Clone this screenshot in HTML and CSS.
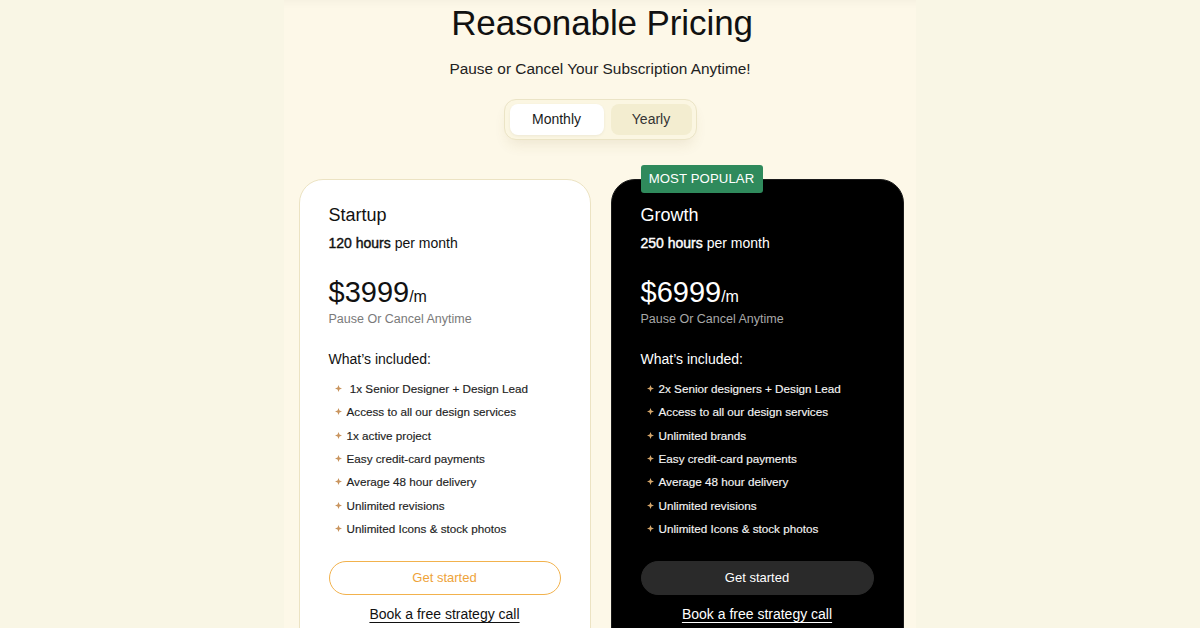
FILE: index.html
```html
<!DOCTYPE html>
<html lang="en">
<head>
<meta charset="utf-8">
<title>Reasonable Pricing</title>
<link rel="stylesheet" href="styles.css">
</head>
<body>
<main class="panel">
  <h1 class="title">Reasonable Pricing</h1>
  <p class="subtitle">Pause or Cancel Your Subscription Anytime!</p>
  <div class="toggle">
    <button class="seg seg-active">Monthly</button>
    <button class="seg seg-idle">Yearly</button>
  </div>

  <section class="plans">
    <article class="plan plan-light">
      <h2 class="plan-name">Startup</h2>
      <p class="plan-hours"><strong>120 hours</strong> per month</p>
      <p class="plan-price">$3999<span class="per">/m</span></p>
      <p class="plan-note">Pause Or Cancel Anytime</p>
      <h3 class="plan-incl">What’s included:</h3>
      <ul class="features">
        <li><svg class="star" viewBox="0 0 8 8"><path d="M4 0L5.1 2.9L8 4L5.1 5.1L4 8L2.9 5.1L0 4L2.9 2.9Z"/></svg><span>&nbsp;1x Senior Designer + Design Lead</span></li>
        <li><svg class="star" viewBox="0 0 8 8"><path d="M4 0L5.1 2.9L8 4L5.1 5.1L4 8L2.9 5.1L0 4L2.9 2.9Z"/></svg><span>Access to all our design services</span></li>
        <li><svg class="star" viewBox="0 0 8 8"><path d="M4 0L5.1 2.9L8 4L5.1 5.1L4 8L2.9 5.1L0 4L2.9 2.9Z"/></svg><span>1x active project</span></li>
        <li><svg class="star" viewBox="0 0 8 8"><path d="M4 0L5.1 2.9L8 4L5.1 5.1L4 8L2.9 5.1L0 4L2.9 2.9Z"/></svg><span>Easy credit-card payments</span></li>
        <li><svg class="star" viewBox="0 0 8 8"><path d="M4 0L5.1 2.9L8 4L5.1 5.1L4 8L2.9 5.1L0 4L2.9 2.9Z"/></svg><span>Average 48 hour delivery</span></li>
        <li><svg class="star" viewBox="0 0 8 8"><path d="M4 0L5.1 2.9L8 4L5.1 5.1L4 8L2.9 5.1L0 4L2.9 2.9Z"/></svg><span>Unlimited revisions</span></li>
        <li><svg class="star" viewBox="0 0 8 8"><path d="M4 0L5.1 2.9L8 4L5.1 5.1L4 8L2.9 5.1L0 4L2.9 2.9Z"/></svg><span>Unlimited Icons &amp; stock photos</span></li>
      </ul>
      <a class="btn btn-outline" href="#">Get started</a>
      <a class="plan-link" href="#">Book a free strategy call</a>
    </article>

    <article class="plan plan-dark">
      <span class="badge">MOST POPULAR</span>
      <h2 class="plan-name">Growth</h2>
      <p class="plan-hours"><strong>250 hours</strong> per month</p>
      <p class="plan-price">$6999<span class="per">/m</span></p>
      <p class="plan-note">Pause Or Cancel Anytime</p>
      <h3 class="plan-incl">What’s included:</h3>
      <ul class="features">
        <li><svg class="star" viewBox="0 0 8 8"><path d="M4 0L5.1 2.9L8 4L5.1 5.1L4 8L2.9 5.1L0 4L2.9 2.9Z"/></svg><span>2x Senior designers + Design Lead</span></li>
        <li><svg class="star" viewBox="0 0 8 8"><path d="M4 0L5.1 2.9L8 4L5.1 5.1L4 8L2.9 5.1L0 4L2.9 2.9Z"/></svg><span>Access to all our design services</span></li>
        <li><svg class="star" viewBox="0 0 8 8"><path d="M4 0L5.1 2.9L8 4L5.1 5.1L4 8L2.9 5.1L0 4L2.9 2.9Z"/></svg><span>Unlimited brands</span></li>
        <li><svg class="star" viewBox="0 0 8 8"><path d="M4 0L5.1 2.9L8 4L5.1 5.1L4 8L2.9 5.1L0 4L2.9 2.9Z"/></svg><span>Easy credit-card payments</span></li>
        <li><svg class="star" viewBox="0 0 8 8"><path d="M4 0L5.1 2.9L8 4L5.1 5.1L4 8L2.9 5.1L0 4L2.9 2.9Z"/></svg><span>Average 48 hour delivery</span></li>
        <li><svg class="star" viewBox="0 0 8 8"><path d="M4 0L5.1 2.9L8 4L5.1 5.1L4 8L2.9 5.1L0 4L2.9 2.9Z"/></svg><span>Unlimited revisions</span></li>
        <li><svg class="star" viewBox="0 0 8 8"><path d="M4 0L5.1 2.9L8 4L5.1 5.1L4 8L2.9 5.1L0 4L2.9 2.9Z"/></svg><span>Unlimited Icons &amp; stock photos</span></li>
      </ul>
      <a class="btn btn-solid" href="#">Get started</a>
      <a class="plan-link" href="#">Book a free strategy call</a>
    </article>
  </section>
</main>
</body>
</html>
```

FILE: styles.css
```css
* { box-sizing: border-box; }

html, body {
  margin: 0;
  padding: 0;
}

body {
  background: #f9f6e5;
  font-family: "Liberation Sans", Arial, sans-serif;
  color: #111;
  height: 628px;
  overflow: hidden;
}

.panel {
  width: 632px;
  margin: 0 auto;
  min-height: 628px;
  background: #fdf8e8;
  box-shadow: inset 0 12px 10px -10px rgba(0, 0, 0, 0.04);
  display: flex;
  flex-direction: column;
  align-items: center;
  padding-top: 2px;
}

.title {
  margin: 0;
  font-size: 35px;
  line-height: 42px;
  font-weight: 400;
  color: #111;
  letter-spacing: -0.1px;
  transform: translateX(2px);
}

.subtitle {
  margin: 15px 0 0;
  font-size: 15.4px;
  line-height: 20px;
  color: #222;
}

.toggle {
  margin-top: 20px;
  display: flex;
  gap: 7px;
  padding: 4px 4px 4px 5px;
  background: #fbf6e2;
  border: 1px solid #ebe4c6;
  border-radius: 12px;
  box-shadow: 0 8px 14px -4px rgba(120, 100, 40, 0.12);
}

.seg {
  font-family: inherit;
  font-size: 14px;
  line-height: 31px;
  height: 31px;
  border: 0;
  border-radius: 8px;
  padding: 0;
  color: #1a1a1a;
  cursor: pointer;
}

.seg-active {
  width: 94px;
  background: #fff;
  box-shadow: 0 1px 3px rgba(0, 0, 0, 0.06);
}

.seg-idle {
  width: 81px;
  background: #f3edd0;
  color: #333;
}

.plans {
  margin-top: 39px;
  margin-left: 2px;
  display: flex;
  gap: 20px;
  align-items: flex-start;
}

.plan {
  position: relative;
  width: 292px;
  border-radius: 24px;
  padding: 24px 29px 40px;
  display: flex;
  flex-direction: column;
  min-height: 480px;
}

.plan-light {
  background: #fff;
  border: 1px solid #ece3c3;
  color: #111;
}

.plan-dark {
  width: 293px;
  background: #000;
  border: 1px solid #1a1a1a;
  color: #fff;
}

.badge {
  position: absolute;
  top: -15px;
  left: 29px;
  width: 122px;
  height: 28px;
  line-height: 28px;
  text-align: center;
  background: #2f8a5c;
  color: #fff;
  font-size: 13.2px;
  border-radius: 3px;
  letter-spacing: 0.1px;
}

.plan-name {
  margin: 0;
  font-size: 18px;
  line-height: 22px;
  font-weight: 400;
}

.plan-hours {
  margin: 7px 0 0;
  font-size: 14px;
  line-height: 20px;
}

.plan-hours strong {
  font-weight: 400;
  -webkit-text-stroke: 0.4px currentColor;
}

.plan-price {
  margin: 22px 0 0;
  font-size: 29px;
  line-height: 34px;
}

.plan-price .per {
  font-size: 16px;
}

.plan-note {
  margin: -3px 0 0;
  font-size: 12.5px;
  line-height: 16px;
  color: #7a7a7a;
}

.plan-dark .plan-note { color: #a8a8a8; }

.plan-incl {
  margin: 22px 0 0;
  font-size: 14px;
  line-height: 20px;
  font-weight: 400;
}

.features {
  list-style: none;
  margin: 8px 0 0;
  padding: 0 0 0 6px;
}

.features li {
  display: flex;
  align-items: center;
  gap: 5px;
  font-size: 11.7px;
  line-height: 23.33px;
  color: #1e1e1e;
}

.plan-dark .features li { color: #f4f4f4; }

.features li span {
  -webkit-text-stroke: 0.15px currentColor;
}

.star {
  width: 7px;
  height: 7px;
  fill: #c9945e;
  flex: none;
}

.plan-dark .star { fill: #d6a76b; }

.btn {
  margin-top: 21px;
  display: block;
  height: 34px;
  line-height: 32px;
  border-radius: 17px;
  text-align: center;
  font-size: 13px;
  text-decoration: none;
}

.btn-outline {
  border: 1px solid #f2b24d;
  color: #eea33a;
  background: #fff;
}

.btn-solid {
  border: 1px solid #2a2a2a;
  background: #2a2a2a;
  color: #fff;
}

.plan-link {
  margin-top: 9px;
  align-self: center;
  font-size: 14px;
  line-height: 20px;
  color: inherit;
  text-decoration: underline;
  text-underline-offset: 3px;
  text-decoration-thickness: 1px;
}
```
